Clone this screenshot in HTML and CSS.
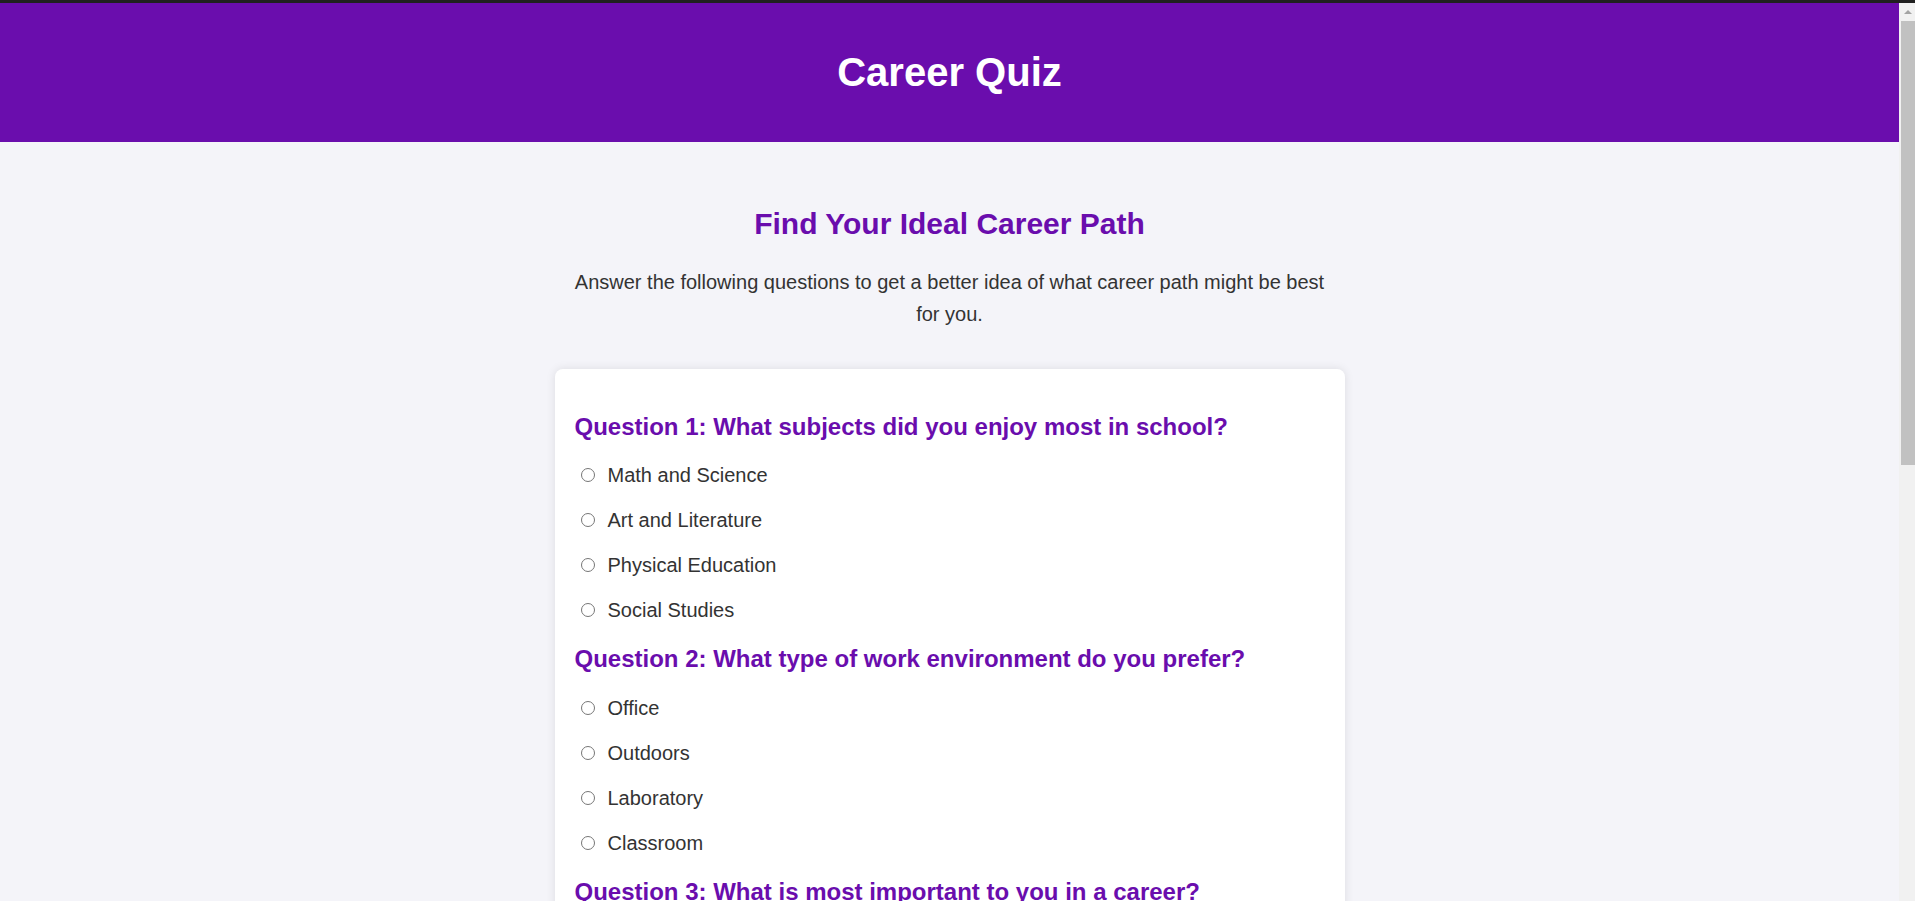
FILE: index.html
```html
<!DOCTYPE html>
<html lang="en">
<head>
<meta charset="UTF-8">
<title>Career Quiz</title>
<link rel="stylesheet" href="styles.css">
</head>
<body>
<div class="topline"></div>
<header class="site-header">
  <h1>Career Quiz</h1>
</header>
<main class="main">
  <section class="intro">
    <h2>Find Your Ideal Career Path</h2>
    <p>Answer the following questions to get a better idea of what career path might be best for you.</p>
  </section>
  <form class="quiz-card">
    <div class="question">
      <h3>Question 1: What subjects did you enjoy most in school?</h3>
      <label class="option"><input type="radio" name="q1" value="a">Math and Science</label>
      <label class="option"><input type="radio" name="q1" value="b">Art and Literature</label>
      <label class="option"><input type="radio" name="q1" value="c">Physical Education</label>
      <label class="option"><input type="radio" name="q1" value="d">Social Studies</label>
    </div>
    <div class="question">
      <h3>Question 2: What type of work environment do you prefer?</h3>
      <label class="option"><input type="radio" name="q2" value="a">Office</label>
      <label class="option"><input type="radio" name="q2" value="b">Outdoors</label>
      <label class="option"><input type="radio" name="q2" value="c">Laboratory</label>
      <label class="option"><input type="radio" name="q2" value="d">Classroom</label>
    </div>
    <div class="question">
      <h3>Question 3: What is most important to you in a career?</h3>
      <label class="option"><input type="radio" name="q3" value="a">High Salary</label>
      <label class="option"><input type="radio" name="q3" value="b">Job Security</label>
      <label class="option"><input type="radio" name="q3" value="c">Creativity</label>
      <label class="option"><input type="radio" name="q3" value="d">Helping Others</label>
    </div>
    <div class="question">
      <h3>Question 4: Which of these skills is your strongest?</h3>
      <label class="option"><input type="radio" name="q4" value="a">Problem Solving</label>
      <label class="option"><input type="radio" name="q4" value="b">Communication</label>
      <label class="option"><input type="radio" name="q4" value="c">Leadership</label>
      <label class="option"><input type="radio" name="q4" value="d">Teamwork</label>
    </div>
    <div class="question">
      <h3>Question 5: How do you prefer to spend your free time?</h3>
      <label class="option"><input type="radio" name="q5" value="a">Reading</label>
      <label class="option"><input type="radio" name="q5" value="b">Playing Sports</label>
      <label class="option"><input type="radio" name="q5" value="c">Creating Art</label>
      <label class="option"><input type="radio" name="q5" value="d">Volunteering</label>
    </div>
    <button type="button" class="submit-btn">Submit</button>
  </form>
</main>
<div class="scrollbar" aria-hidden="true">
  <div class="scroll-arrow"></div>
  <div class="scroll-thumb"></div>
</div>
</body>
</html>
```
FILE: styles.css
```css
html, body {
  margin: 0;
  padding: 0;
}

body {
  font-family: "Liberation Sans", Arial, sans-serif;
  background: #f4f4f9;
  color: #333;
  padding-right: 16px;
}

.topline {
  height: 3px;
  background: #202020;
}

.site-header {
  background: #6a0dad;
  color: #fff;
  text-align: center;
  padding: 20px 0;
}

.site-header h1 {
  font-size: 40px;
  margin: 26.8px 0;
  line-height: normal;
}

.main {
  width: 790px;
  margin: 0 auto;
  padding: 41px 0 60px;
}

.intro {
  padding: 0 20px;
  text-align: center;
}

.intro h2 {
  font-size: 30px;
  color: #6a0dad;
  margin: 24.9px 0;
}

.intro p {
  font-size: 20px;
  line-height: 32px;
  margin: 20px 0;
}

.quiz-card {
  margin-top: 39px;
  background: #fff;
  border-radius: 8px;
  box-shadow: 0 0 10px rgba(0, 0, 0, 0.1);
  padding: 20px;
}

.question h3 {
  font-size: 24px;
  color: #6a0dad;
  margin: 23.3px 0 23.5px;
}

.option {
  display: block;
  font-size: 20px;
  margin: 0 0 22px;
}

.option input {
  width: 14px;
  height: 14px;
  margin: 0 13px 0 6px;
  vertical-align: baseline;
}

.submit-btn {
  display: block;
  margin-top: 30px;
  background: #6a0dad;
  color: #fff;
  border: none;
  border-radius: 5px;
  padding: 12px 24px;
  font-family: inherit;
  font-size: 20px;
}

/* simulated browser scrollbar overlay */
.scrollbar {
  position: fixed;
  top: 0;
  right: 0;
  width: 16px;
  height: 100%;
  background: #f1f1f1;
  border-top: 3px solid #202020;
  box-sizing: border-box;
}

.scroll-arrow {
  width: 0;
  height: 0;
  margin: 7px auto 0 5px;
  border-left: 4px solid transparent;
  border-right: 4px solid transparent;
  border-bottom: 4px solid #a3a3a3;
}

.scroll-thumb {
  margin: 7px 0 0 2px;
  width: 14px;
  height: 444px;
  background: #c1c1c1;
}
```
